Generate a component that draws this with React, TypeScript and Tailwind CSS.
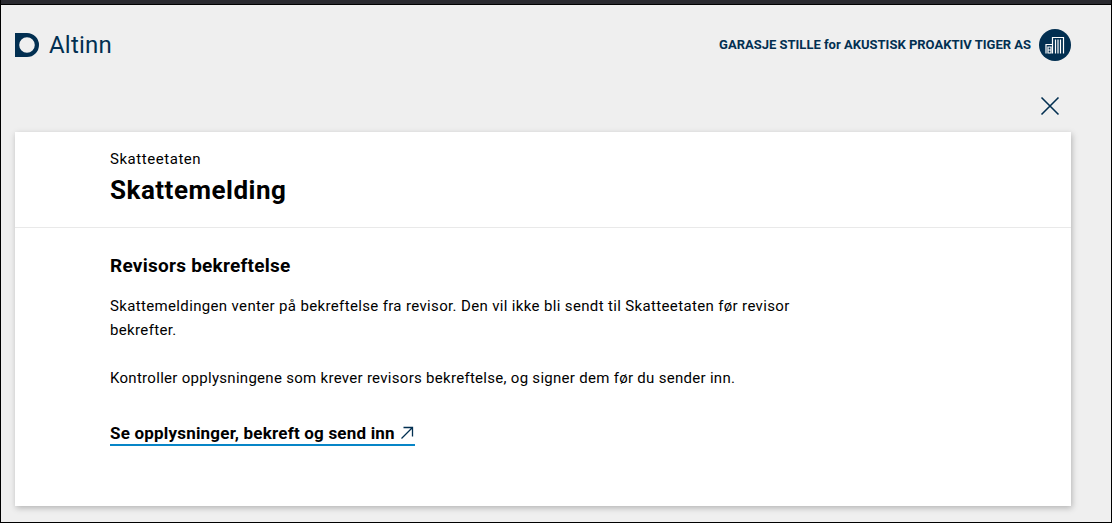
import React from 'react';

const AltinnLogo = () => (
  <svg width="24" height="24" viewBox="0 0 24 24" className="shrink-0">
    <path fillRule="evenodd" fill="#022f51" d="M0 0h12a12 12 0 0 1 0 24H0V0zm12 4.2a7.8 7.8 0 1 0 0 15.6 7.8 7.8 0 0 0 0-15.6z" />
  </svg>
);

const OrgIcon = () => (
  <div className="flex h-8 w-8 items-center justify-center rounded-full bg-[#022f51]">
    <svg width="20" height="20" viewBox="0 0 20 20" fill="none" stroke="#fff" strokeWidth="1.2">
      <path d="M1 18.5V9.5h6.5" />
      <path d="M7.5 18.5V2.5h11v16" />
      <path d="M10.5 4.5v14M13 4.5v14M15.5 4.5v14" />
      <path d="M3 12h3v6H3zM3 15h3" />
    </svg>
  </div>
);

export default function App() {
  return (
    <div className="flex h-[523px] w-[1112px] flex-col overflow-hidden border-b border-l border-r border-black bg-[#efefef] font-['Roboto',sans-serif] text-black">
      <div className="h-[5px] shrink-0 border-b border-black bg-[#2a2a30]" />

      <header className="flex h-[80px] shrink-0 items-center justify-between pl-[14px] pr-[40px]">
        <div className="flex items-center gap-[10px]">
          <AltinnLogo />
          <span className="text-[24px] leading-none tracking-[0.2px] text-[#022f51]">Altinn</span>
        </div>
        <div className="flex items-center gap-2">
          <span className="text-[13px] font-bold text-[#022f51]">
            GARASJE STILLE for AKUSTISK PROAKTIV TIGER AS
          </span>
          <OrgIcon />
        </div>
      </header>

      <div className="flex h-[47px] shrink-0 items-start justify-end pr-[51px] pt-[11px]">
        <svg width="20" height="20" viewBox="0 0 20 20" fill="none" stroke="#022f51" strokeWidth="1.6">
          <path d="M1.5 1.5l17 17M18.5 1.5l-17 17" />
        </svg>
      </div>

      <main className="ml-[14px] mr-[40px] h-[374px] bg-white shadow-[1px_2px_6px_rgba(0,0,0,0.25)]">
        <div className="h-[96px] border-b border-[#e9e9e9] pl-[95px] pt-[18px]">
          <p className="text-[15px] leading-[18px] tracking-[0.55px]">Skatteetaten</p>
          <h1 className="mt-[6px] text-[26px] font-bold leading-[32px] tracking-[0.5px]">Skattemelding</h1>
        </div>
        <div className="pl-[95px] pt-[26px]">
          <h2 className="text-[19px] font-bold leading-6 tracking-[0.25px]">Revisors bekreftelse</h2>
          <p className="mt-[16px] w-[700px] text-[15px] leading-[24px] tracking-[0.35px]">
            Skattemeldingen venter på bekreftelse fra revisor. Den vil ikke bli sendt til Skatteetaten før revisor bekrefter.
          </p>
          <p className="mt-6 text-[15px] leading-[24px] tracking-[0.29px]">
            Kontroller opplysningene som krever revisors bekreftelse, og signer dem før du sender inn.
          </p>
          <a className="mt-[33px] inline-flex items-center gap-[6px] border-b-2 border-[#0785c7] pb-[1px] text-[17px] font-bold leading-[20px] tracking-[0.2px]">
            Se opplysninger, bekreft og send inn
            <svg width="14" height="14" viewBox="0 0 14 14" fill="none" stroke="#022f51" strokeWidth="1.3" className="-translate-x-[1px]">
              <path d="M1.5 12.5L12.5 1.5M3.5 1.5h9v9" />
            </svg>
          </a>
        </div>
      </main>
    </div>
  );
}
